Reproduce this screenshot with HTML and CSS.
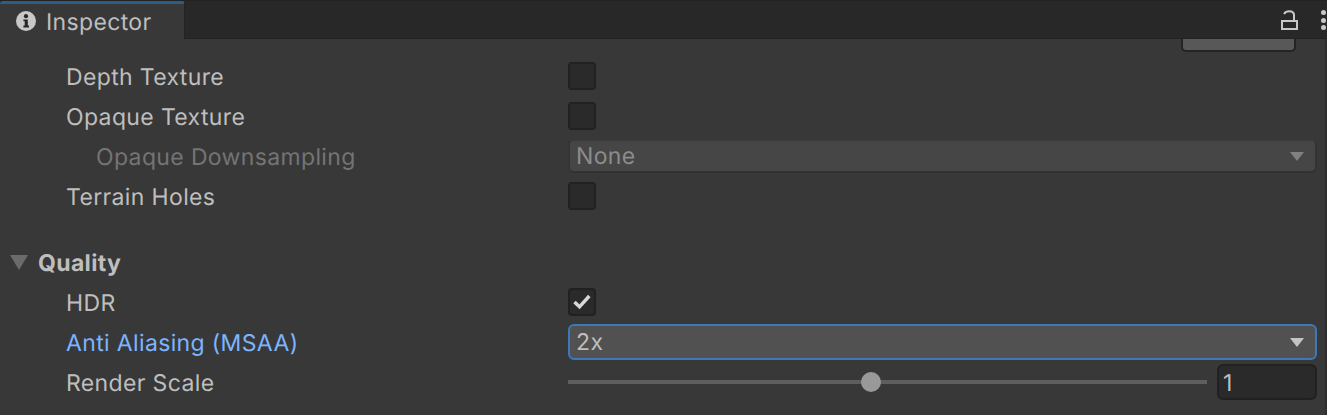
FILE: index.html
```html
<!DOCTYPE html>
<html lang="en">
<head>
<meta charset="utf-8">
<title>Inspector</title>
<link rel="stylesheet" href="styles.css">
</head>
<body>
<div class="panel">
  <header class="tabbar">
    <div class="tab">
      <svg class="info-icon" viewBox="0 0 20 20" width="20" height="20"><circle cx="10" cy="10" r="10" fill="#c8c8c8"/><circle cx="10" cy="5.200" r="2.100" fill="#282828"/><path d="M7.400 8.400h4.400v6.200h1.200v1.900H7.400v-1.900h1.300v-4.300H7.400z" fill="#282828"/></svg>
      <span>Inspector</span>
    </div>
    <div class="tab-actions">
      <svg class="lock" viewBox="0 0 17 20" width="17" height="20"><path d="M1 11h15v8H1z" fill="none" stroke="#c8c8c8" stroke-width="2"/><path d="M3 4C5 0.500 12 0 13 4.500V11" fill="none" stroke="#c8c8c8" stroke-width="2"/></svg>
      <div class="dots"><i></i><i></i><i></i></div>
    </div>
  </header>
  <main class="content">
    <div class="stub-row"><div class="stub-button"></div></div>
    <div class="row"><label class="label">Depth Texture</label><div class="field"><span class="check"></span></div></div>
    <div class="row"><label class="label">Opaque Texture</label><div class="field"><span class="check"></span></div></div>
    <div class="row disabled"><label class="label sub">Opaque Downsampling</label><div class="field"><div class="select"><span>None</span><b class="arrow"></b></div></div></div>
    <div class="row"><label class="label">Terrain Holes</label><div class="field"><span class="check"></span></div></div>
    <div class="section"><b class="fold"></b><span>Quality</span></div>
    <div class="row"><label class="label">HDR</label><div class="field"><span class="check"><svg viewBox="0 0 18 16" width="18" height="16"><path d="M1.500 8 6.500 12.800 16.300 2" fill="none" stroke="#d8d8d8" stroke-width="3.400"/></svg></span></div></div>
    <div class="row"><label class="label active">Anti Aliasing (MSAA)</label><div class="field"><div class="select focused"><span>2x</span><b class="arrow"></b></div></div></div>
    <div class="row"><label class="label">Render Scale</label><div class="field slider-field"><div class="slider"><i class="thumb"></i></div><div class="num">1</div></div></div>
  </main>
</div>
</body>
</html>
```
FILE: styles.css
```css
* { box-sizing: border-box; }
html, body { margin: 0; height: 100%; }
body { background: #383838; overflow: hidden; font-family: Inter, "Liberation Sans", sans-serif; font-size: 23px; letter-spacing: 0.36px; color: #bebebe; text-rendering: geometricPrecision; }
.panel { height: 415px; border-right: 2px solid #2e2e2e; display: flex; flex-direction: column; }
.tabbar { height: 39px; flex: none; background: #282828; border-top: 1px solid #222; border-bottom: 1px solid #232323; display: flex; justify-content: space-between; margin-right: -2px; }
.tab { width: 185px; height: 38px; background: #383838; border-top: 3px solid #2c5d87; border-right: 1px solid #232323; border-radius: 3px 3px 0 0; display: flex; align-items: center; gap: 10px; padding-left: 16px; padding-bottom: 1px; }
.tab span { line-height: 30px; padding-top: 2px; }
.info-icon { flex: none; }
.tab-actions { display: flex; align-items: center; }
.lock { margin-right: 23px; margin-top: 1px; }
.dots { display: flex; flex-direction: column; gap: 2.500px; margin-top: 1px; width: 7px; margin-right: -1px; }
.dots i { width: 5px; height: 5px; border-radius: 50%; background: #c8c8c8; }
.content { flex: 1; display: flex; flex-direction: column; }
.stub-row { height: 17px; display: flex; justify-content: flex-end; padding-right: 29px; }
.stub-button { width: 115px; height: 13px; background: #585858; border: 2px solid #242424; border-top: 0; border-radius: 0 0 5px 5px; }
.row { height: 40px; display: flex; align-items: center; flex: none; }
.label { width: 568px; padding-left: 66px; padding-top: 2px; flex: none; white-space: nowrap; }
.label.sub { padding-left: 96px; }
.disabled .label { color: #747474; }
.label.active { color: #7cb4ff; }
.field { width: 749px; display: flex; align-items: center; }
.check { width: 28px; height: 28px; background: #2a2a2a; border: 2px solid #212121; border-radius: 4px; display: flex; align-items: center; justify-content: center; }
.select { width: 100%; height: 36px; background: #515151; border: 2px solid #303030; border-radius: 6px; display: flex; align-items: center; justify-content: space-between; padding: 0 11px 0 6px; }
.disabled .select { background: #464646; border-color: #3a3a3a #333 #313131 #343434; color: #8c8c8c; height: 34px; }
.disabled .arrow { border-top-color: #808080; }
.select.focused { background: #515151; border-color: #3a79bb; }
.arrow { width: 0; height: 0; border-left: 7.500px solid transparent; border-right: 7.500px solid transparent; border-top: 9px solid #c4c4c4; }
.section { height: 40px; margin-top: 26px; display: flex; align-items: center; flex: none; padding-left: 10px; padding-top: 1px; font-weight: 700; }
.section span { margin-left: 10px; }
.fold { width: 0; height: 0; border-left: 9px solid transparent; border-right: 9px solid transparent; border-top: 15px solid #6b6b6b; }
.slider-field { gap: 10px; }
.slider { flex: 1; height: 4px; background: #5e5e5e; position: relative; }
.thumb { position: absolute; left: 293px; top: -8px; width: 20px; height: 20px; border-radius: 50%; background: #999; }
.num { width: 100px; height: 36px; background: #2a2a2a; border: 2px solid #212121; border-radius: 6px; padding-left: 4px; line-height: 34px; }
```
